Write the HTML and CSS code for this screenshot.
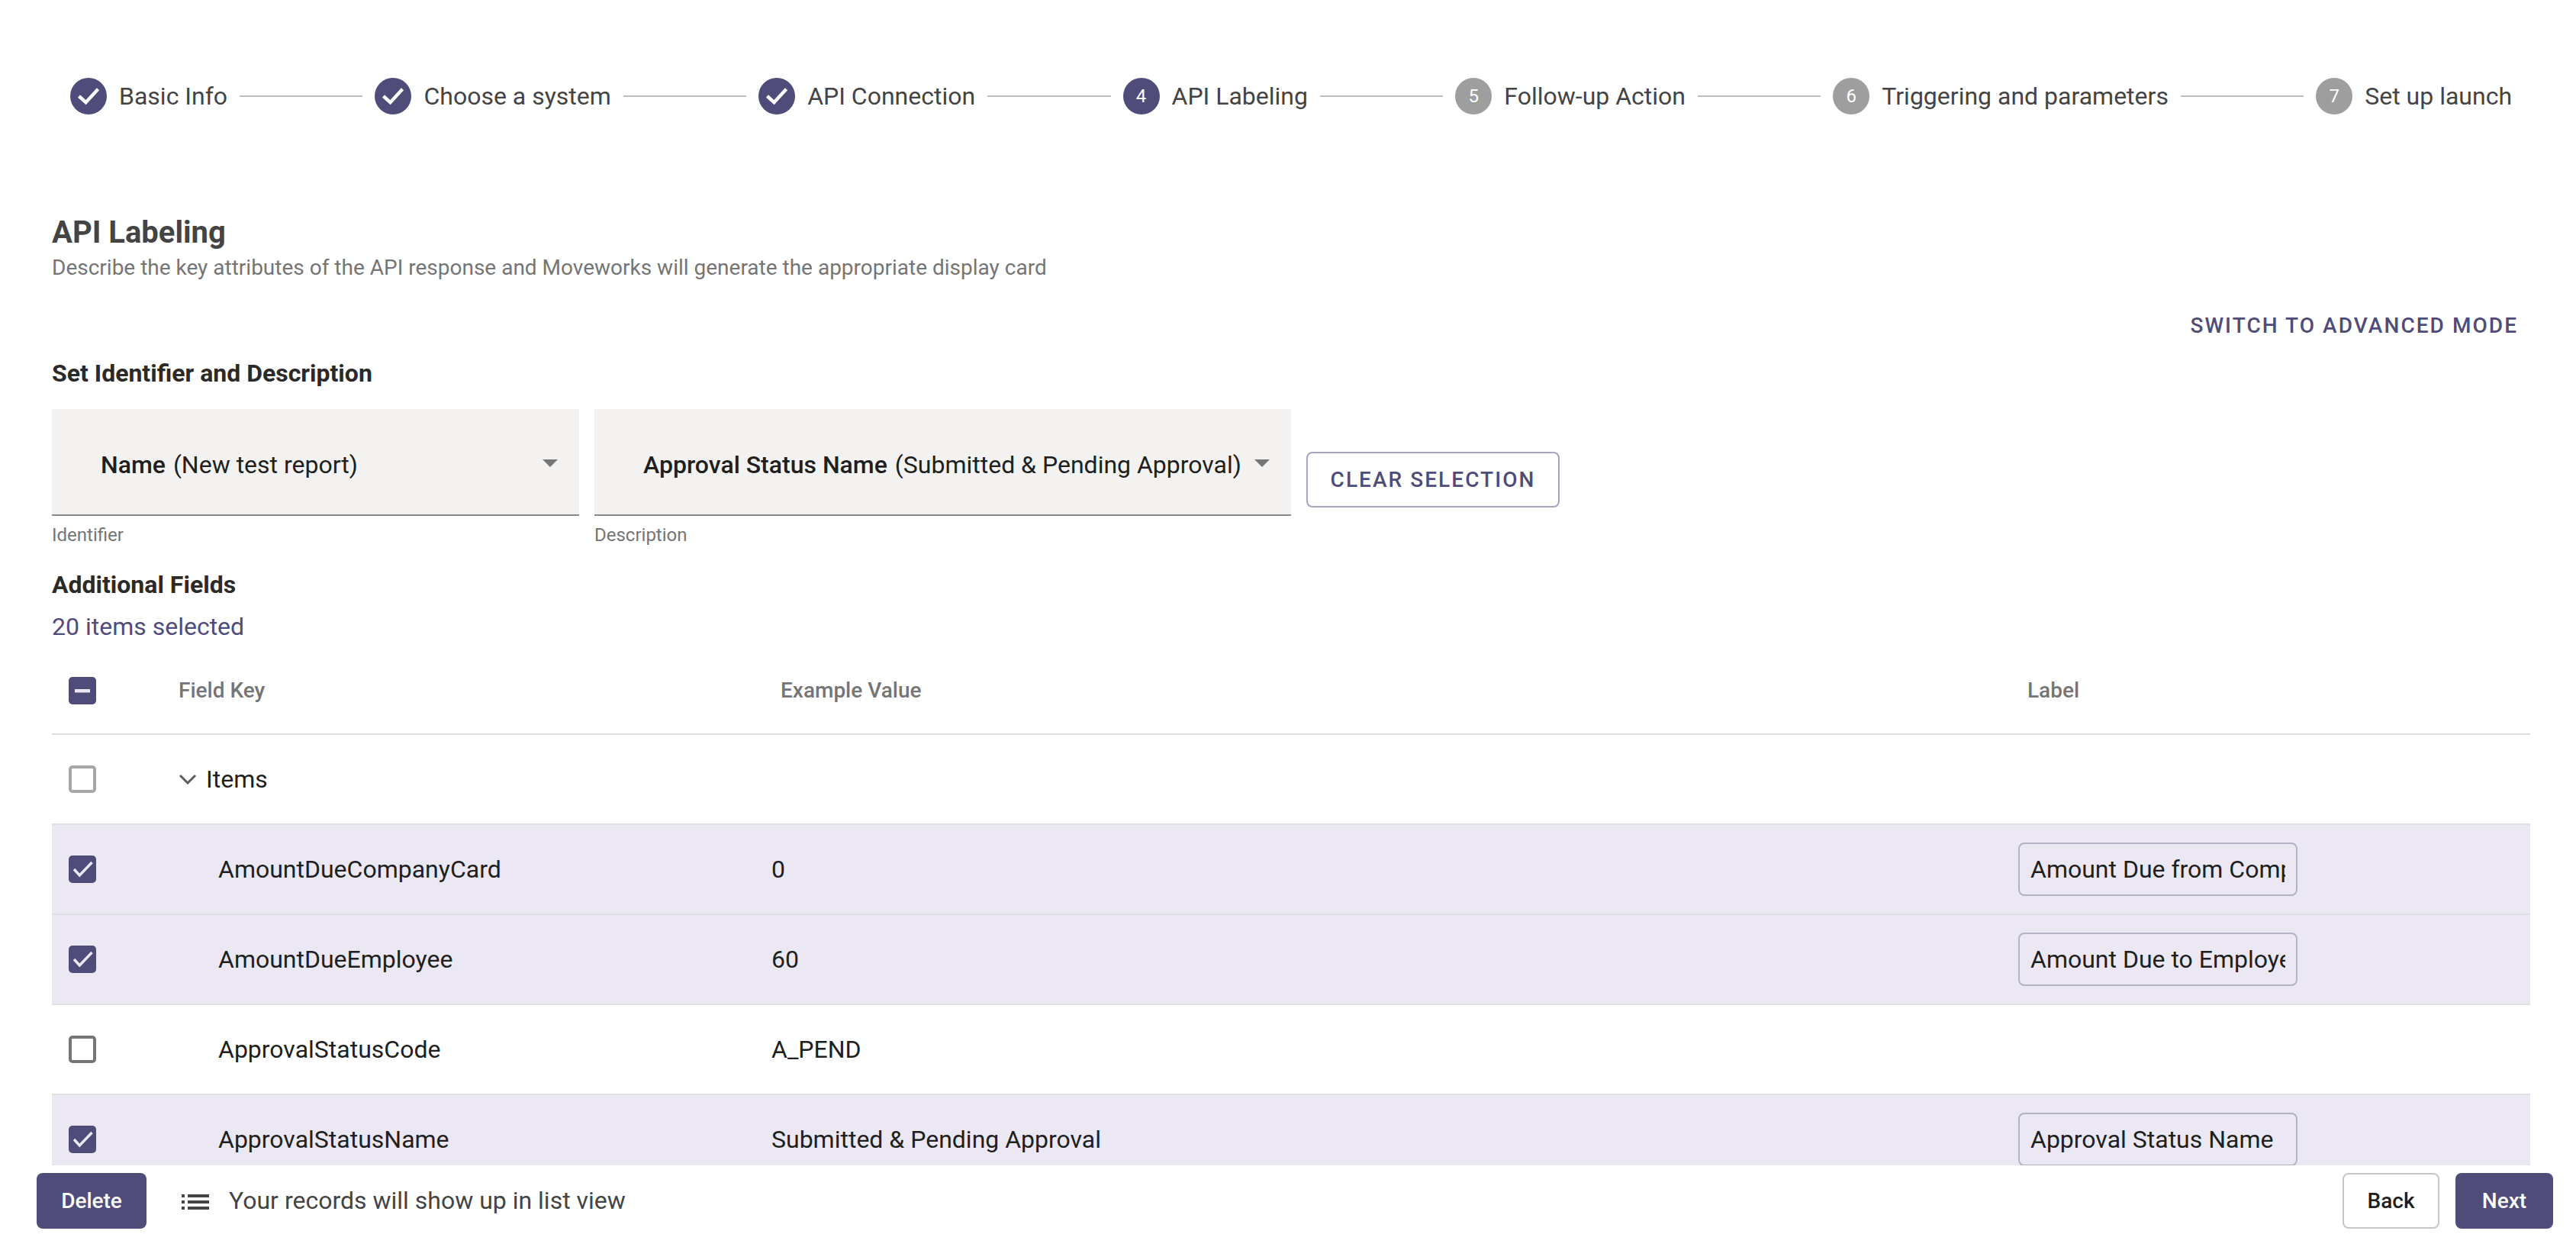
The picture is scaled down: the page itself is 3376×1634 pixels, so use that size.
FILE: index.html
```html
<!DOCTYPE html>
<html lang="en">
<head>
    <meta charset="UTF-8">
    <title>API Labeling</title>
    <link rel="stylesheet" href="styles.css">
</head>
<body>
    <main class="content">
        <!-- steps -->
        <div class="stepper">
            <div class="step">
                <span class="step-icon"><svg viewBox="0 0 48 48"><path class="tick" d="M11.5 24l9 8.2 16-17.5"/></svg></span>
                <span class="step-label">Basic Info</span>
            </div>
            <div class="step-line"></div>
            <div class="step">
                <span class="step-icon"><svg viewBox="0 0 48 48"><path class="tick" d="M11.5 24l9 8.2 16-17.5"/></svg></span>
                <span class="step-label">Choose a system</span>
            </div>
            <div class="step-line"></div>
            <div class="step">
                <span class="step-icon"><svg viewBox="0 0 48 48"><path class="tick" d="M11.5 24l9 8.2 16-17.5"/></svg></span>
                <span class="step-label">API Connection</span>
            </div>
            <div class="step-line"></div>
            <div class="step">
                <span class="step-icon">4</span>
                <span class="step-label">API Labeling</span>
            </div>
            <div class="step-line"></div>
            <div class="step">
                <span class="step-icon todo">5</span>
                <span class="step-label">Follow-up Action</span>
            </div>
            <div class="step-line"></div>
            <div class="step">
                <span class="step-icon todo">6</span>
                <span class="step-label">Triggering and parameters</span>
            </div>
            <div class="step-line"></div>
            <div class="step">
                <span class="step-icon todo">7</span>
                <span class="step-label">Set up launch</span>
            </div>
        </div>

        <h1 class="page-title">API Labeling</h1>
        <p class="page-desc">Describe the key attributes of the API response and Moveworks will generate the appropriate display card</p>

        <div class="mode-row">
            <button class="link-button">Switch to advanced mode</button>
        </div>

        <h2 class="section-title first">Set Identifier and Description</h2>

        <div class="select-row">
            <div class="select-field identifier">
                <div class="select-box">
                    <span class="select-value"><b>Name</b> (New test report)</span>
                    <span class="caret"></span>
                </div>
                <div class="helper">Identifier</div>
            </div>
            <div class="select-field description">
                <div class="select-box">
                    <span class="select-value"><b>Approval Status Name</b> (Submitted &amp; Pending Approval)</span>
                    <span class="caret"></span>
                </div>
                <div class="helper">Description</div>
            </div>
            <button class="outline-button">Clear selection</button>
        </div>

        <h2 class="section-title fields">Additional Fields</h2>
        <div class="selected-count">20 items selected</div>

        <div class="table">
            <div class="row head">
                <div class="cell-check">
                    <span class="checkbox on"><svg viewBox="0 0 36 36"><rect class="dash" x="8" y="16" width="20" height="4.5"/></svg></span>
                </div>
                <div class="cell-head">Field Key</div>
                <div class="cell-head">Example Value</div>
                <div class="cell-head">Label</div>
            </div>
            <div class="row">
                <div class="cell-check"><span class="checkbox light"></span></div>
                <div class="cell-group">
                    <svg class="chevron" viewBox="0 0 24 14"><path d="M2 2l10 10L22 2"/></svg>
                    Items
                </div>
                <div></div>
                <div></div>
            </div>
            <div class="row selected">
                <div class="cell-check">
                    <span class="checkbox on"><svg viewBox="0 0 36 36"><path class="tick thin" d="M7 18l7.300 8L30.500 9"/></svg></span>
                </div>
                <div class="cell-key">AmountDueCompanyCard</div>
                <div>0</div>
                <div><input class="label-input" type="text" value="Amount Due from Company Card"></div>
            </div>
            <div class="row selected">
                <div class="cell-check">
                    <span class="checkbox on"><svg viewBox="0 0 36 36"><path class="tick thin" d="M7 18l7.300 8L30.500 9"/></svg></span>
                </div>
                <div class="cell-key">AmountDueEmployee</div>
                <div>60</div>
                <div><input class="label-input" type="text" value="Amount Due to Employee"></div>
            </div>
            <div class="row">
                <div class="cell-check"><span class="checkbox"></span></div>
                <div class="cell-key">ApprovalStatusCode</div>
                <div>A_PEND</div>
                <div></div>
            </div>
            <div class="row selected">
                <div class="cell-check">
                    <span class="checkbox on"><svg viewBox="0 0 36 36"><path class="tick thin" d="M7 18l7.300 8L30.500 9"/></svg></span>
                </div>
                <div class="cell-key">ApprovalStatusName</div>
                <div>Submitted &amp; Pending Approval</div>
                <div><input class="label-input" type="text" value="Approval Status Name"></div>
            </div>
        </div>
    </main>

    <footer class="footer">
        <button class="solid-button delete">Delete</button>
        <svg class="list-icon" viewBox="0 0 24 24"><path d="M3 13h2v-2H3v2zm0 4h2v-2H3v2zm0-8h2V7H3v2zm4 4h14v-2H7v2zm0 4h14v-2H7v2zM7 7v2h14V7H7z"/></svg>
        <span class="footer-note">Your records will show up in list view</span>
        <div class="footer-actions">
            <button class="plain-button">Back</button>
            <button class="solid-button next">Next</button>
        </div>
    </footer>
</body>
</html>
```

FILE: styles.css
```css
* {
    box-sizing: border-box;
}
html, body {
    height: 100%;
}
body {
    margin: 0;
    display: flex;
    flex-direction: column;
    height: 100vh;
    overflow: hidden;
    background: #fff;
    color: #201f1e;
    font-family: Roboto, "Liberation Sans", sans-serif;
    font-size: 32px;
}
button {
    font-family: inherit;
    cursor: pointer;
}
.content {
    flex: 1;
    min-height: 0;
    overflow: hidden;
    padding: 0 60px 0 68px;
}

/* stepper */
.stepper {
    display: flex;
    align-items: center;
    padding: 102px 24px 0;
}
.step {
    display: flex;
    align-items: center;
    gap: 16px;
}
.step-icon {
    width: 48px;
    height: 48px;
    border-radius: 50%;
    background: #4f4c7a;
    color: #fff;
    font-size: 24px;
    display: flex;
    align-items: center;
    justify-content: center;
}
.step-icon.todo {
    background: #9e9e9e;
}
.step-icon svg {
    width: 48px;
    height: 48px;
}
.tick {
    fill: none;
    stroke: #fff;
    stroke-width: 4.4;
}
.tick.thin {
    stroke: #ebe8f4;
    stroke-width: 3.4;
}
.step-label {
    color: #444;
    line-height: 48px;
    white-space: nowrap;
}
.step-line {
    flex: 1;
    height: 2px;
    margin: 0 16px;
    background: #bdbdbd;
}

/* headings */
.page-title {
    margin: 131px 0 0;
    font-size: 40px;
    line-height: 48px;
    font-weight: 700;
    color: #444;
}
.page-desc {
    margin: 4px 0 0;
    font-size: 28px;
    line-height: 36px;
    color: #757575;
}
.mode-row {
    display: flex;
    justify-content: flex-end;
    margin: 40px 0 0;
    padding-right: 16px;
}
.link-button {
    border: 0;
    padding: 0;
    background: none;
    color: #4f4c7a;
    font-size: 28px;
    line-height: 36px;
    font-weight: 500;
    letter-spacing: 2.05px;
    text-transform: uppercase;
}
.section-title {
    margin: 0;
    font-size: 32px;
    line-height: 40px;
    font-weight: 700;
    color: #2b2a29;
}
.section-title.first {
    margin-top: 24px;
}
.section-title.fields {
    margin-top: 30px;
}

/* selects */
.select-row {
    display: flex;
    align-items: flex-start;
    gap: 20px;
    margin-top: 27px;
}
.select-field.identifier {
    width: 691px;
}
.select-field.description {
    width: 913px;
}
.select-box {
    height: 140px;
    padding: 4px 28px 0 64px;
    display: flex;
    align-items: center;
    justify-content: space-between;
    background: #f3f2f1;
    border-bottom: 2px solid #8a8886;
    white-space: nowrap;
}
.select-value {
    padding-top: 4px;
}
.select-value b {
    font-weight: 500;
    margin-right: 2px;
}
.caret {
    width: 0;
    height: 0;
    border-left: 10px solid transparent;
    border-right: 10px solid transparent;
    border-top: 10px solid #757575;
}
.helper {
    margin-top: 10px;
    font-size: 24px;
    line-height: 30px;
    color: #757575;
}
.outline-button {
    width: 332px;
    height: 73px;
    margin-top: 56px;
    background: #fff;
    border: 2px solid #a7a5bd;
    border-radius: 8px;
    color: #4f4c7a;
    font-size: 28px;
    font-weight: 500;
    letter-spacing: 2.05px;
    text-transform: uppercase;
}
.selected-count {
    margin-top: 15px;
    line-height: 40px;
    color: #4f4c7a;
}

/* table */
.table {
    margin-top: 8px;
}
.row {
    display: grid;
    grid-template-columns: 154px 789px 1634px 671px;
    align-items: center;
    height: 118px;
    border-bottom: 2px solid #e0e0e0;
}
.row.head {
    height: 114px;
}
.row.selected {
    background: #ebe8f4;
    border-bottom-color: #e1dfe6;
}
.cell-check {
    padding-left: 22px;
    display: flex;
}
.checkbox {
    width: 36px;
    height: 36px;
    border: 4px solid #767676;
    border-radius: 5px;
    display: block;
}
.checkbox.light {
    border-color: #a6a6a6;
}
.checkbox.on {
    border: 0;
    background: #4f4c7a;
}
.checkbox svg {
    display: block;
    width: 36px;
    height: 36px;
}
.dash {
    fill: #ebe8f4;
}
.cell-head {
    padding: 0 0 2px 12px;
    font-size: 28px;
    font-weight: 500;
    color: #757575;
}
.cell-group {
    padding-left: 12px;
    display: flex;
    align-items: center;
    gap: 12px;
}
.chevron {
    width: 24px;
    height: 14px;
    fill: none;
    stroke: #605e5c;
    stroke-width: 3;
}
.cell-key {
    padding-left: 64px;
}
.label-input {
    display: block;
    width: 366px;
    height: 70px;
    padding: 0 14px;
    background: transparent;
    border: 2px solid #b5b2c6;
    border-radius: 8px;
    color: #201f1e;
    font-family: inherit;
    font-size: 32px;
}

/* footer */
.footer {
    flex: none;
    height: 107px;
    padding: 10px 30px 0 48px;
    display: flex;
    align-items: flex-start;
    background: #fff;
}
.solid-button {
    height: 73px;
    background: #4f4c7a;
    border: 0;
    border-radius: 8px;
    color: #fff;
    font-size: 28px;
    font-weight: 500;
}
.delete {
    width: 144px;
}
.next {
    width: 128px;
}
.plain-button {
    width: 127px;
    height: 73px;
    background: #fff;
    border: 2px solid #c8c6c4;
    border-radius: 8px;
    color: #201f1e;
    font-size: 28px;
    font-weight: 500;
}
.list-icon {
    width: 48px;
    height: 48px;
    margin: 14px 20px 0 40px;
    fill: #444;
}
.footer-note {
    line-height: 73px;
    color: #444;
}
.footer-actions {
    margin-left: auto;
    display: flex;
    gap: 21px;
}
```
